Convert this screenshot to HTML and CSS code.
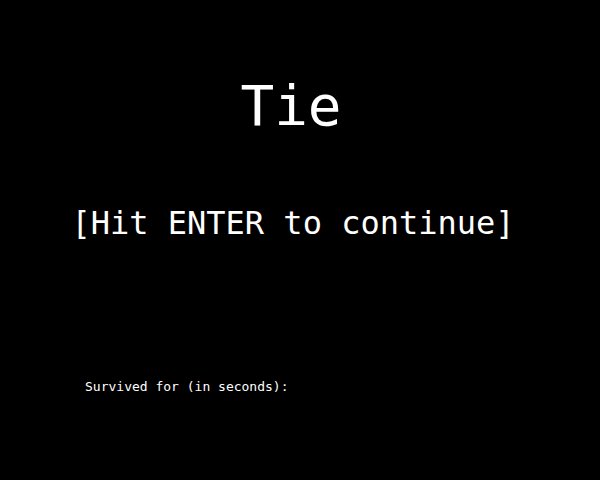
FILE: index.html
```html
<!DOCTYPE html>
<html>
<head>
<meta charset="utf-8">
<link rel="stylesheet" href="styles.css">
</head>
<body>
<main class="screen">
  <h1 class="result">Tie</h1>
  <p class="prompt">[Hit ENTER to continue]</p>
  <p class="stats">Survived for (in seconds):</p>
</main>
</body>
</html>
```
FILE: styles.css
```css
html, body {
  margin: 0;
  padding: 0;
  background: #000;
}
.screen {
  width: 600px;
  height: 480px;
  box-sizing: border-box;
  padding-top: 78px;
  display: flex;
  flex-direction: column;
  color: #fff;
  font-family: "DejaVu Sans Mono", monospace;
}
.result {
  margin: 0;
  padding-right: 18px;
  font-size: 56px;
  font-weight: normal;
  line-height: 56px;
  text-align: center;
}
.prompt {
  margin: 73px 0 0;
  padding-right: 14px;
  font-size: 32px;
  line-height: 32px;
  text-align: center;
}
.stats {
  margin: 141px 0 0;
  padding-left: 85px;
  font-size: 13px;
  line-height: 13px;
}
```
